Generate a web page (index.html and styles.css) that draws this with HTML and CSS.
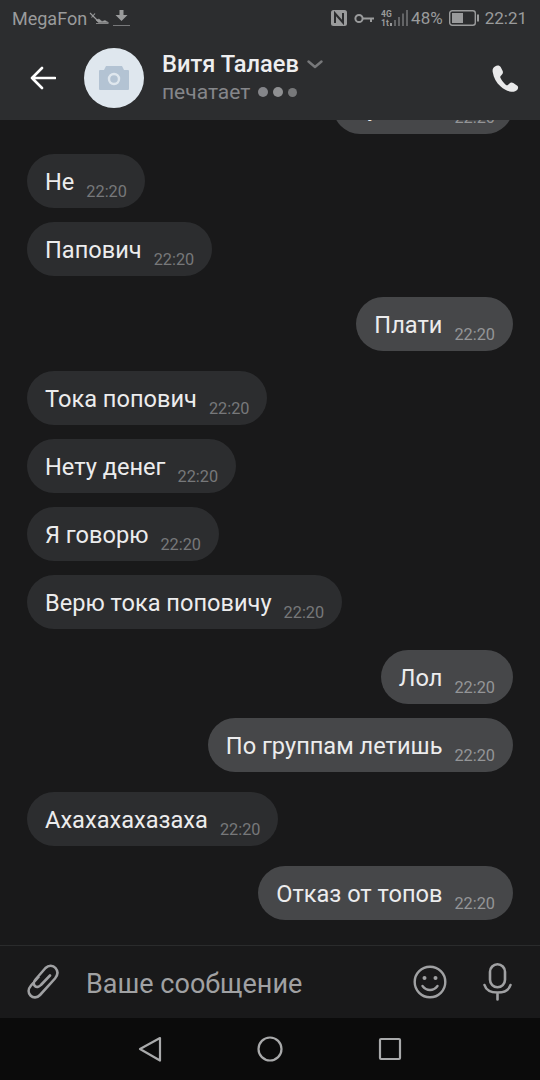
FILE: index.html
```html
<!DOCTYPE html>
<html lang="ru">
<head>
<meta charset="utf-8">
<title>Витя Талаев</title>
<link rel="stylesheet" href="styles.css">
</head>
<body>
<div class="screen">
  <header class="top">
    <div class="status">
      <div class="status-left">
        <span class="carrier">MegaFon</span>
        <svg class="ic-mower" width="20" height="14" viewBox="0 0 20 14" fill="none" stroke="#9a9b9c"><path d="M1 2 9 10M6 2.500 2.500 6.500" stroke-width="1.100"/><path d="M7 9 9.500 11.500H19.500L16 9.500 13 10.500 10 8Z" fill="#9a9b9c" stroke-width=".5"/><path d="M7 12.500H19.500" stroke-width=".8"/></svg>
        <svg class="ic-down" width="17" height="17" viewBox="0 0 17 17"><path d="M6.500 0h4v5h4l-6 6-6-6h4Z" fill="#9a9b9c"/><path d="M0 15.500h17" stroke="#77787a" stroke-width="1"/></svg>
      </div>
      <div class="status-right">
        <svg width="18" height="18" viewBox="0 0 18 18" fill="none"><rect x="1" y="1" width="16" height="16" rx="2.500" fill="#9a9b9c"/><path d="M5 14V4.500L13 13.500V4" stroke="#2c2d2f" stroke-width="2"/></svg>
        <svg class="ic-key" width="21" height="11" viewBox="0 0 21 11" fill="none" stroke="#9a9b9c" stroke-width="2"><circle cx="5" cy="5.500" r="3.600"/><path d="M9 5.500h11M17 5.500v3.500"/></svg>
        <svg class="ic-signal" width="27" height="18" viewBox="0 0 27 18"><g fill="#9a9b9c"><text x="0" y="7.500" class="tiny">4G</text><text x="0" y="16.500" class="tiny">1t</text><rect x="9" y="14" width="2" height="3"/></g><g fill="#636466"><rect x="13" y="11" width="2" height="6"/><rect x="17" y="8" width="2" height="9"/><rect x="21" y="4.500" width="2" height="12.500"/><rect x="25" y="1" width="2" height="16"/></g></svg>
        <span class="pct">48%</span>
        <svg class="ic-batt" width="30" height="16" viewBox="0 0 30 16" fill="none"><rect x=".7" y=".7" width="25.600" height="14.600" rx="2.500" stroke="#9a9b9c" stroke-width="1.400"/><rect x="3" y="3" width="11" height="10" fill="#9a9b9c"/><rect x="28" y="4.500" width="2" height="7" fill="#9a9b9c"/></svg>
        <span class="clock">22:21</span>
      </div>
    </div>
    <div class="bar">
      <svg class="back" width="26" height="24" viewBox="0 0 26 24" fill="none" stroke="#fff" stroke-width="2.600" stroke-linecap="round" stroke-linejoin="round"><path d="M25 12H2M12 2 2 12l10 10"/></svg>
      <div class="avatar">
        <svg width="30" height="24" viewBox="0 0 30 24"><path d="M1 4h4l2-4h16l2 4h4a1 1 0 0 1 1 1v18a1 1 0 0 1-1 1H1a1 1 0 0 1-1-1V5a1 1 0 0 1 1-1Z" fill="#b3c3d3"/><circle cx="15" cy="13" r="5" fill="none" stroke="#dfe7ee" stroke-width="2.400"/></svg>
      </div>
      <div class="who">
        <div class="name-row">
          <span class="name">Витя Талаев</span>
          <svg width="16" height="9" viewBox="0 0 16 9" fill="none" stroke="#77787a" stroke-width="2.400" stroke-linecap="round" stroke-linejoin="round"><path d="M1.500 1.500 8 7l6.500-5.500"/></svg>
        </div>
        <div class="typing">
          <span>печатает</span>
          <i class="dot d1"></i><i class="dot d2"></i><i class="dot d3"></i>
        </div>
      </div>
      <svg class="phone" width="27" height="27" viewBox="0 0 27 27"><path d="M3 1.500C1 2.500.3 4.500.7 7c1 6 3.500 10.500 8 14.500 3 2.700 6 4.500 10.500 5.200 2 .3 5-.3 6.300-2.200.8-1.200.9-2.800-.2-3.700l-4-2.700c-1.300-.9-2.800-.7-3.800.3l-1.600 1.500c-.6.500-1.300.5-1.900 0-2.500-2-4.300-4.300-5.600-7.100-.3-.7-.2-1.300.3-1.800L10 9.500c1-1 1.200-2.200.7-3.500L8.800 2.200C7.800.3 5-.2 3 1.500Z" fill="#e9e9ea"/></svg>
    </div>
  </header>

  <main class="chat">
    <div class="msg out"><div class="bubble"><span class="text">Ну влом</span><span class="time">22:20</span></div></div>

    <div class="group in">
      <div class="bubble"><span class="text">Не</span><span class="time">22:20</span></div>
      <div class="bubble"><span class="text">Папович</span><span class="time">22:20</span></div>
    </div>
    <div class="group out">
      <div class="bubble"><span class="text">Плати</span><span class="time">22:20</span></div>
    </div>
    <div class="group in">
      <div class="bubble"><span class="text">Тока попович</span><span class="time">22:20</span></div>
      <div class="bubble"><span class="text">Нету денег</span><span class="time">22:20</span></div>
      <div class="bubble"><span class="text">Я говорю</span><span class="time">22:20</span></div>
      <div class="bubble"><span class="text">Верю тока поповичу</span><span class="time">22:20</span></div>
    </div>
    <div class="group out">
      <div class="bubble"><span class="text">Лол</span><span class="time">22:20</span></div>
      <div class="bubble"><span class="text">По группам летишь</span><span class="time">22:20</span></div>
    </div>
    <div class="group in">
      <div class="bubble"><span class="text">Ахахахахазаха</span><span class="time">22:20</span></div>
    </div>
    <div class="group out">
      <div class="bubble"><span class="text">Отказ от топов</span><span class="time">22:20</span></div>
    </div>
  </main>

  <footer class="composer">
    <svg class="clip" width="32" height="36" viewBox="0 0 32 36" fill="none" stroke="#a0a1a3" stroke-width="2.600" stroke-linecap="round" stroke-linejoin="round"><path d="M11.500 13 4 21.500c-3 3.500-3 7.500-.5 10s6.500 2.700 9.500-.5L28 14.500c3-3.500 3-7.500.5-10.500s-7-3-10 0L8.500 15.500c-2 2.500-2.200 5-.6 6.500s4 1.200 6-1L23 11.500"/></svg>
    <span class="placeholder">Ваше сообщение</span>
    <svg class="smile" width="34" height="34" viewBox="0 0 34 34" fill="none" stroke="#a0a1a3" stroke-width="2.400" stroke-linecap="round"><circle cx="17" cy="17" r="15.300"/><circle cx="11.500" cy="13" r="2" fill="#a0a1a3" stroke="none"/><circle cx="22.500" cy="13" r="2" fill="#a0a1a3" stroke="none"/><path d="M9.500 21c2 2.700 4.500 4 7.500 4s5.500-1.300 7.500-4"/></svg>
    <svg class="mic" width="29" height="38" viewBox="0 0 29 38" fill="none" stroke="#a0a1a3" stroke-width="2.600" stroke-linecap="round"><rect x="7" y="1.300" width="15" height="23" rx="7.500"/><path d="M1.500 22C3 27 8 29.500 14.500 29.500S26 27 27.500 22M14.500 29.500v7"/></svg>
  </footer>

  <nav class="navbar">
    <svg width="24" height="26" viewBox="0 0 24 26" fill="none" stroke="#a9aaab" stroke-width="2.200" stroke-linejoin="round"><path d="M22 2 2 13l20 11.500Z"/></svg>
    <svg width="26" height="26" viewBox="0 0 26 26" fill="none" stroke="#a9aaab" stroke-width="2.200"><circle cx="13" cy="13" r="11.500"/></svg>
    <svg width="24" height="24" viewBox="0 0 24 24" fill="none" stroke="#a9aaab" stroke-width="2.200" stroke-linejoin="round"><rect x="2" y="2" width="20" height="20" rx="1"/></svg>
  </nav>
</div>
</body>
</html>
```

FILE: styles.css
```css
* { box-sizing: border-box; }
html, body { margin: 0; padding: 0; }
body { background: #19191a; font-family: Roboto, "Noto Sans", sans-serif; }

.screen { width: 540px; height: 1080px; display: flex; flex-direction: column; overflow: hidden; }

.top { flex: 0 0 120px; background: #2c2d2f; display: flex; flex-direction: column; }

.status { flex: none; height: 36px; padding: 0 13px 0 12px; display: flex; justify-content: space-between; align-items: center; color: #9a9b9c; font-size: 17px; }
.status-left, .status-right { display: flex; align-items: center; }
.carrier { font-size: 18px; }
.ic-mower { margin-left: 2px; }
.ic-down { margin-left: 4px; }
.status-right svg { flex: none; }
.ic-key { margin-left: 6px; }
.ic-signal { margin-left: 6px; }
.tiny { font-size: 8.500px; font-weight: 700; font-family: Roboto, sans-serif; }
.pct { margin-left: 3px; }
.ic-batt { margin-left: 6px; }
.clock { margin-left: 6px; }

.bar { flex: 1; display: flex; align-items: center; padding: 0 21px 0 30px; }
.back { flex: none; }
.avatar { flex: none; width: 60px; height: 60px; border-radius: 50%; background: #dfe7ee; margin-left: 28px; display: flex; align-items: center; justify-content: center; }
.who { flex: 1; margin-left: 18px; }
.name-row { display: flex; align-items: center; gap: 8px; }
.name { font-size: 23.700px; font-weight: 500; color: #eeeeef; line-height: 28px; }
.typing { display: flex; align-items: center; font-size: 21px; color: #85868a; line-height: 28px; }
.dot { display: block; border-radius: 50%; background: #85868a; }
.d1 { width: 10px; height: 10px; margin-left: 8px; }
.d2 { width: 10px; height: 10px; margin-left: 5px; background: #8f9092; }
.d3 { width: 9px; height: 9px; margin-left: 5px; background: #77787a; }
.phone { flex: none; }

.chat { flex: 1; min-height: 0; overflow: hidden; display: flex; flex-direction: column; justify-content: flex-end; padding: 0 27px 24.600px; gap: 20.400px; border-bottom: 1px solid #2a2b2c; }

.msg, .group { display: flex; flex-direction: column; gap: 14px; flex: none; }
.in { align-items: flex-start; }
.out { align-items: flex-end; }

.bubble { height: 54px; border-radius: 27px; padding: 2px 18px 0; display: flex; align-items: center; gap: 12px; }
.in .bubble { background: #2c2d2f; }
.out .bubble { background: #464749; }
.text { font-size: 23.600px; line-height: 28px; color: #ececed; white-space: nowrap; }
.time { font-size: 16.300px; line-height: 20px; color: #77787a; margin-top: 20px; }
.out .time { color: #949597; }

.composer { flex: 0 0 72px; background: #19191a; display: flex; align-items: center; padding: 0 28px 0 27px; }
.clip { flex: none; }
.placeholder { flex: 1; margin-left: 27px; padding-top: 4px; font-size: 27px; color: #a0a1a3; }
.smile { flex: none; }
.mic { flex: none; margin-left: 36px; }

.navbar { flex: 0 0 62px; background: #0b0b0b; display: flex; align-items: center; justify-content: center; gap: 95px; }
```
